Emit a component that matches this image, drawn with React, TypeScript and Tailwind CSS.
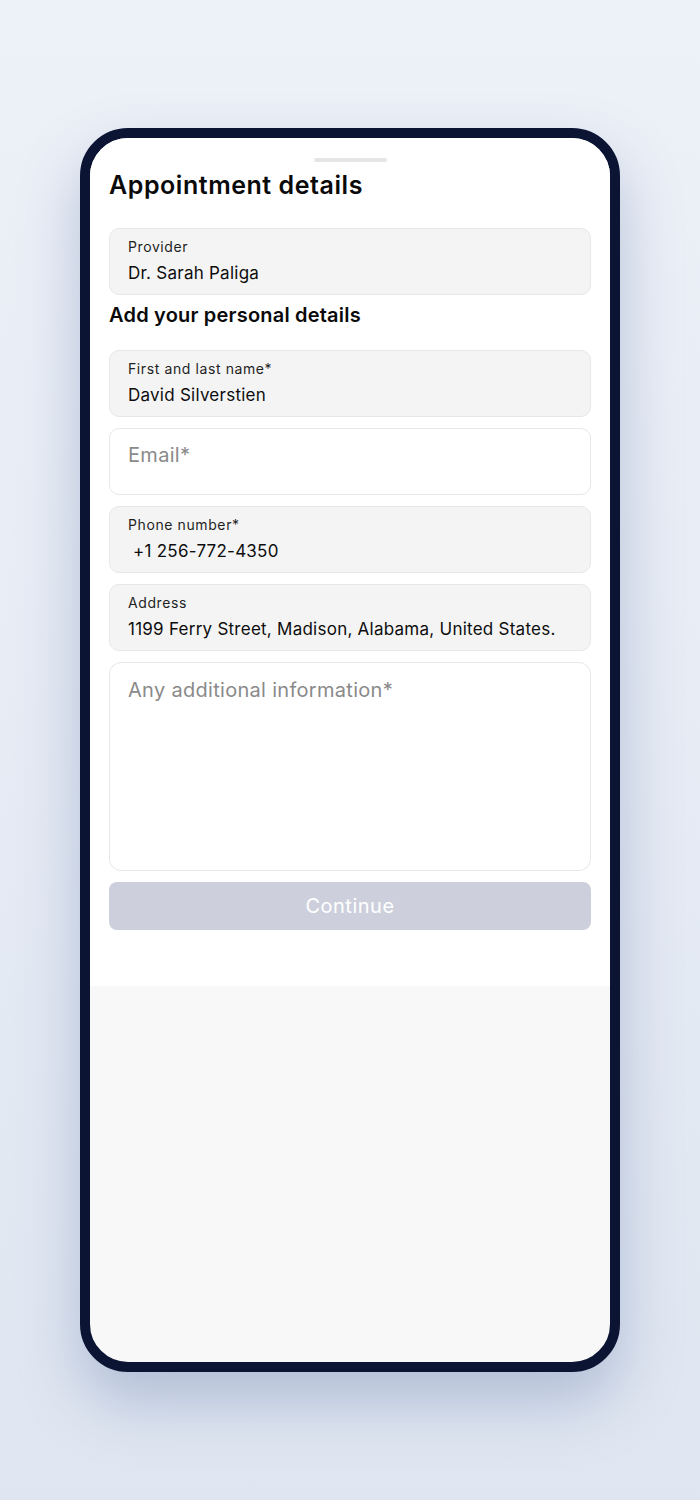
const font = { fontFamily: 'Inter, "Noto Sans", sans-serif' }

function FilledField({ label, value, indent = false }: { label: string; value: string; indent?: boolean }) {
  return (
    <div className="h-[67px] rounded-[10px] border border-[#e7e7e7] bg-[#f4f4f4] px-[18px] pt-[8px]">
      <p className="text-[14px] leading-[20px] text-[#1f1f1f] tracking-[0.6px]">{label}</p>
      <p className={`mt-[5px] text-[17px] leading-[22px] text-[#0d0d0d] tracking-[0.25px] ${indent ? 'pl-[5px]' : ''}`}>{value}</p>
    </div>
  )
}

export default function App() {
  return (
    <div className="min-h-[1500px] bg-gradient-to-b from-[#edf1f8] to-[#dfe6f1] pt-[128px]" style={font}>
      <div className="mx-auto flex h-[1244px] w-[540px] flex-col overflow-hidden rounded-[48px] border-[10px] border-[#0b1433] bg-[#f8f8f8] shadow-[0_30px_60px_rgba(120,140,180,0.45)]">
        <div className="h-[848px] bg-white px-[19px] pt-[20px]">
          <div className="mx-auto h-[4px] w-[73px] rounded-full bg-[#e5e5e5]" />
          <h1 className="mt-[7px] text-[25px] font-semibold leading-[32px] tracking-[0.55px] text-[#0a0a0a]">Appointment details</h1>
          <div className="mt-[27px]">
            <FilledField label="Provider" value="Dr. Sarah Paliga" />
          </div>
          <h2 className="mt-[8px] text-[20px] font-semibold leading-[24px] tracking-[0.2px] text-[#0a0a0a]">Add your personal details</h2>
          <div className="mt-[23px] flex flex-col gap-[11px]">
            <FilledField label="First and last name*" value="David Silverstien" />
            <div className="h-[67px] rounded-[10px] border border-[#e7e7e7] bg-white px-[18px] pt-[14px]">
              <p className="text-[20px] leading-[24px] text-[#8a8a8a] tracking-[0.3px]">Email*</p>
            </div>
            <FilledField label="Phone number*" value="+1 256-772-4350" indent />
            <FilledField label="Address" value="1199 Ferry Street, Madison, Alabama, United States." />
            <div className="h-[209px] rounded-[12px] border border-[#e7e7e7] bg-white px-[18px] pt-[15px]">
              <p className="text-[20px] leading-[24px] text-[#8a8a8a] tracking-[0.3px]">Any additional information*</p>
            </div>
            <button className="h-[48px] rounded-[8px] bg-[#cdd0dc] text-[20px] text-white tracking-[0.5px]">Continue</button>
          </div>
        </div>
        <div className="flex-1" />
      </div>
    </div>
  )
}
